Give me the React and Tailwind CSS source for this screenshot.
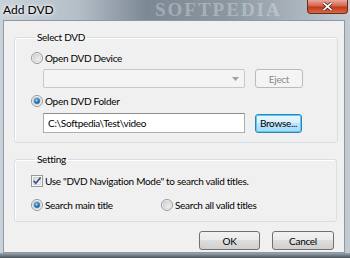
import { useState } from 'react'

function Radio({ checked }) {
  return (
    <svg width="12" height="12" viewBox="0 0 13 13" className="shrink-0">
      <defs>
        <linearGradient id={checked ? 'rbg1' : 'rbg0'} x1="0" y1="0" x2="1" y2="1">
          <stop offset="0" stopColor="#cfcfcf" />
          <stop offset="1" stopColor="#f7f7f7" />
        </linearGradient>
        <radialGradient id="rdot" cx="0.4" cy="0.35" r="0.7">
          <stop offset="0" stopColor="#a8dcff" />
          <stop offset="0.5" stopColor="#2a8ad4" />
          <stop offset="1" stopColor="#0f4b86" />
        </radialGradient>
      </defs>
      <circle cx="6.5" cy="6.5" r="6" fill="#f4f4f4" stroke="#8f9498" strokeWidth="1" />
      <circle cx="6.5" cy="6.5" r="4.3" fill={`url(#${checked ? 'rbg1' : 'rbg0'})`} stroke="#c2c6ca" strokeWidth="0.6" />
      {checked && <circle cx="6.5" cy="6.5" r="3" fill="url(#rdot)" stroke="#1b5a94" strokeWidth="0.5" />}
    </svg>
  )
}

function Check({ checked }) {
  return (
    <svg width="12" height="12" viewBox="0 0 13 13" className="shrink-0">
      <defs>
        <linearGradient id="cbg" x1="0" y1="0" x2="1" y2="1">
          <stop offset="0" stopColor="#d6d6d6" />
          <stop offset="1" stopColor="#fbfbfb" />
        </linearGradient>
      </defs>
      <rect x="0.5" y="0.5" width="12" height="12" fill="#f6f6f6" stroke="#8f9498" />
      <rect x="2.5" y="2.5" width="8" height="8" fill="url(#cbg)" stroke="#c2c6ca" strokeWidth="0.6" />
      {checked && <path d="M2.8 6.3 L5.2 9 L10.4 2.8" fill="none" stroke="#3a4f8a" strokeWidth="1.8" />}
    </svg>
  )
}

function WinButton({ children, className = '', focused, disabled }) {
  let look = 'border-[#707070] bg-[linear-gradient(#f2f2f2_0%,#ebebeb_45%,#dddddd_50%,#cfcfcf_100%)] text-black'
  if (focused) look = 'border-[#3c7fb1] bg-[linear-gradient(#eaf6fd_0%,#d9f0fc_45%,#bee6fd_50%,#a7d9f5_100%)] text-black shadow-[inset_0_0_0_1px_#48d2f9]'
  if (disabled) look = 'border-[#b8bcbf] bg-[#f4f4f4] text-[#8a8a8a]'
  return (
    <button className={`flex items-center justify-center rounded-[3px] border text-[10px] leading-none ${look} ${className}`}>
      {children}
    </button>
  )
}

export default function App() {
  const [path] = useState('C:\\Softpedia\\Test\\video')

  return (
    <div
      className="w-[350px] h-[258px] flex flex-col overflow-hidden bg-[linear-gradient(90deg,#c9d2d9_0%,#b4bfc8_22%,#7c8893_42%,#8a96a0_65%,#aab4bd_85%,#c3ccd3_100%)]"
      style={{ fontFamily: 'Lato, "Noto Sans", sans-serif' }}
    >
      {/* title bar */}
      <div className="h-[20px] flex items-start relative">
        <span className="pl-[3px] pt-[2px] text-[12px] leading-[15px] text-black [text-shadow:0_0_6px_#ffffff,0_0_3px_#ffffff]">Add DVD</span>
        <span className="absolute left-[155px] top-0 text-[19px] leading-none font-bold tracking-[2px] text-white/30" style={{ fontFamily: '"Liberation Serif", serif' }}>
          SOFTPEDIA
        </span>
        <div className="ml-auto mr-[2px] w-[41px] h-[14px] rounded-b-[4px] border border-t-0 border-[#6b2a20] bg-[linear-gradient(#e9a99a_0%,#d4644e_45%,#c13a1e_55%,#d86a3f_100%)] flex items-center justify-center">
          <svg width="11" height="9" viewBox="0 0 11 9">
            <path d="M1.5 0.8 L9.5 8.2 M9.5 0.8 L1.5 8.2" stroke="#3a1410" strokeWidth="3" />
            <path d="M1.5 0.8 L9.5 8.2 M9.5 0.8 L1.5 8.2" stroke="#ffffff" strokeWidth="1.8" />
          </svg>
        </div>
      </div>

      {/* client area */}
      <div className="ml-[3px] mr-[5px] h-[233px] bg-[#f0f0f0] border border-[#8d99a4] pl-[10px] pr-[7px] text-[10px] tracking-[-0.3px] text-black">
        <fieldset className="mt-[8px] border border-[#d5dfe5] rounded-[3px] pl-[16px] pr-[34px] pt-[5px] pb-[9px] shadow-[inset_1px_1px_0_#ffffff]">
          <legend className="ml-[4px] px-[2px] leading-[16px]">Select DVD</legend>
          <div className="flex items-center h-[16px]">
            <Radio checked={false} />
            <span className="ml-[2px]">Open DVD Device</span>
          </div>
          <div className="flex items-center mt-[3px] pl-[12px]">
            <div className="w-[202px] h-[19px] border border-[#c5c9cc] rounded-[2px] bg-[#f4f4f4] flex items-center justify-end pr-[5px]">
              <svg width="7" height="4" viewBox="0 0 7 4">
                <path d="M0 0 H7 L3.5 4 Z" fill="#a0a0a0" />
              </svg>
            </div>
            <WinButton disabled className="ml-[10px] w-[48px] h-[19px]">Eject</WinButton>
          </div>
          <div className="flex items-center h-[16px] mt-[5px]">
            <Radio checked />
            <span className="ml-[2px]">Open DVD Folder</span>
          </div>
          <div className="flex items-center mt-[4px] pl-[12px]">
            <div className="w-[202px] h-[20px] border border-[#abadb3] border-t-[#8e8f8f] bg-white flex items-center pl-[4px] leading-none">
              {path}
            </div>
            <WinButton focused className="ml-[10px] w-[47px] h-[19px]">Browse...</WinButton>
          </div>
        </fieldset>

        <fieldset className="mt-[8px] border border-[#d5dfe5] rounded-[3px] pl-[16px] pt-[6px] pb-[8px] shadow-[inset_1px_1px_0_#ffffff]">
          <legend className="ml-[4px] px-[2px] leading-[16px]">Setting</legend>
          <div className="flex items-center h-[16px]">
            <Check checked />
            <span className="ml-[2px]">Use "DVD Navigation Mode" to search valid titles.</span>
          </div>
          <div className="flex items-center h-[16px] mt-[8px]">
            <div className="flex items-center w-[130px]">
              <Radio checked />
              <span className="ml-[2px]">Search main title</span>
            </div>
            <div className="flex items-center">
              <Radio checked={false} />
              <span className="ml-[2px]">Search all valid titles</span>
            </div>
          </div>
        </fieldset>

        <div className="flex justify-end gap-[12px] mt-[9px] pr-[3px]">
          <WinButton className="w-[61px] h-[19px]">OK</WinButton>
          <WinButton className="w-[62px] h-[19px]">Cancel</WinButton>
        </div>
      </div>

      <div className="flex-1 bg-[linear-gradient(#9aa6b0,#4a5158)]" />
    </div>
  )
}
